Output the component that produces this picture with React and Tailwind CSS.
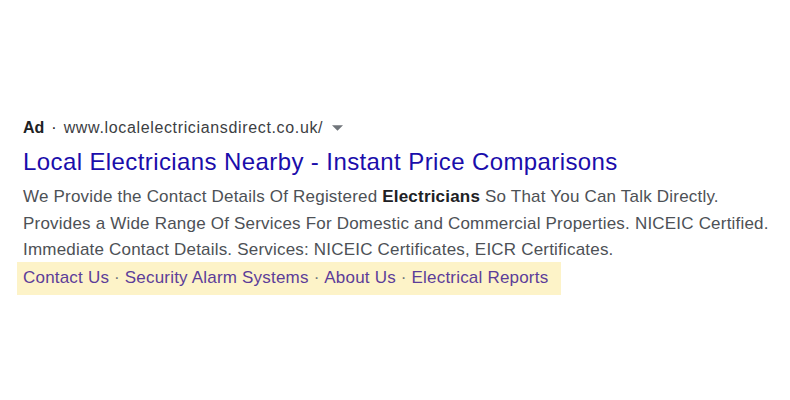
import React from "react";

const sitelinks = ["Contact Us", "Security Alarm Systems", "About Us", "Electrical Reports"];

const App = () => {
  return (
    <div className="w-[790px] h-[400px] bg-white [font-family:'Liberation_Sans',Arial,sans-serif]">
      <div className="pt-[117px] pl-[23px]">
        <div className="flex items-center h-[22px] text-[16px] text-[#202124]">
          <span className="font-bold">Ad</span>
          <span className="mx-[7px]">·</span>
          <span className="text-[#3c4043] tracking-[0.65px]">www.localelectriciansdirect.co.uk/</span>
          <svg width="11" height="6" viewBox="0 0 10 5" className="ml-[9px]">
            <path d="M0 0h10L5 5z" fill="#70757a" />
          </svg>
        </div>
        <h3 className="mt-[9px] text-[24px] leading-[28px] tracking-[0.4px] text-[#1a0dab]">
          Local Electricians Nearby - Instant Price Comparisons
        </h3>
        <div className="mt-[8px] text-[17px] leading-[26.5px] tracking-[0.2px] text-[#4d5156]">
          <p>
            We Provide the Contact Details Of Registered <b className="text-[#202124]">Electricians</b> So That You Can Talk Directly.
          </p>
          <p>Provides a Wide Range Of Services For Domestic and Commercial Properties. NICEIC Certified.</p>
          <p>Immediate Contact Details. Services: NICEIC Certificates, EICR Certificates.</p>
        </div>
      </div>
      <div className="ml-[17px] -mt-[2px] w-[544px] h-[33px] bg-[#fdf3c8] flex items-center pl-[6px] text-[17px] tracking-[0.2px] text-[#5c3d99]">
        {sitelinks.map((s, i) => (
          <React.Fragment key={s}>
            {i > 0 && <span className="mx-[5px] text-[#70757a] tracking-normal">·</span>}
            <span>{s}</span>
          </React.Fragment>
        ))}
      </div>
    </div>
  );
};

export default App;
